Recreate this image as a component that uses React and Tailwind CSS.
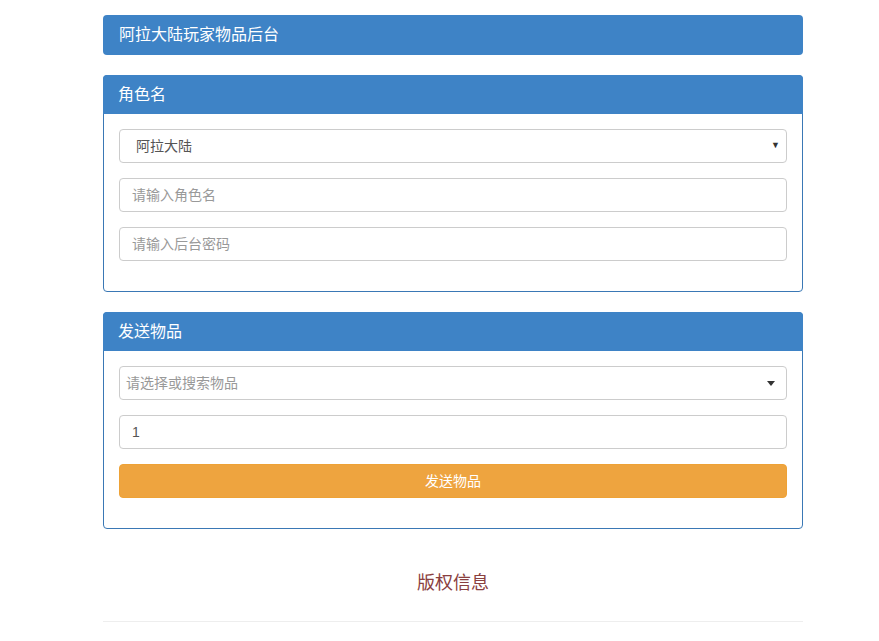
export default function App() {
  const font = { fontFamily: '"Helvetica Neue", "Liberation Sans", "Noto Sans CJK SC", sans-serif' };
  return (
    <div className="min-h-[641px] bg-white" style={font}>
      <div className="w-[700px] ml-[103px] pt-[15px]">
        <div className="h-[40px] rounded-[4px] bg-[#3e83c6] px-[16px] flex items-center text-white text-[16px]">
          阿拉大陆玩家物品后台
        </div>

        <div className="mt-[20px] rounded-[4px] border border-[#3a78b5]">
          <div className="h-[39px] bg-[#3e83c6] px-[15px] flex items-center text-white text-[16px] -mx-px -mt-px rounded-t-[4px]">
            角色名
          </div>
          <div className="px-[15px] pt-[15px] pb-[30px] flex flex-col gap-[15px]">
            <div className="h-[34px] rounded-[4px] border border-[#cccccc] flex items-center justify-between pl-[16px] pr-[6px] text-[14px] text-[#555]">
              <span>阿拉大陆</span>
              <span className="text-[9px] text-[#333]">▼</span>
            </div>
            <div className="h-[34px] rounded-[4px] border border-[#cccccc] flex items-center px-[12px] text-[14px] text-[#999]">
              请输入角色名
            </div>
            <div className="h-[34px] rounded-[4px] border border-[#cccccc] flex items-center px-[12px] text-[14px] text-[#999]">
              请输入后台密码
            </div>
          </div>
        </div>

        <div className="mt-[20px] rounded-[4px] border border-[#3a78b5]">
          <div className="h-[39px] bg-[#3e83c6] px-[15px] flex items-center text-white text-[16px] -mx-px -mt-px rounded-t-[4px]">
            发送物品
          </div>
          <div className="px-[15px] pt-[15px] pb-[30px] flex flex-col gap-[15px]">
            <div className="h-[34px] rounded-[4px] border border-[#cccccc] flex items-center justify-between pl-[6px] pr-[11px] text-[14px] text-[#999]">
              <span>请选择或搜索物品</span>
              <span className="w-0 h-0 border-l-[4px] border-r-[4px] border-t-[5px] border-l-transparent border-r-transparent border-t-[#333]"></span>
            </div>
            <div className="h-[34px] rounded-[4px] border border-[#cccccc] flex items-center px-[12px] text-[14px] text-[#555]">
              1
            </div>
            <div className="h-[34px] rounded-[4px] border border-[#eea236] bg-[#eea43f] flex items-center justify-center text-[14px] text-white">
              发送物品
            </div>
          </div>
        </div>

        <div className="mt-[41px] flex justify-center text-[18px] text-[#8a4040]">
          版权信息
        </div>
        <div className="mt-[24px] border-t border-[#eeeeee]"></div>
      </div>
    </div>
  );
}
